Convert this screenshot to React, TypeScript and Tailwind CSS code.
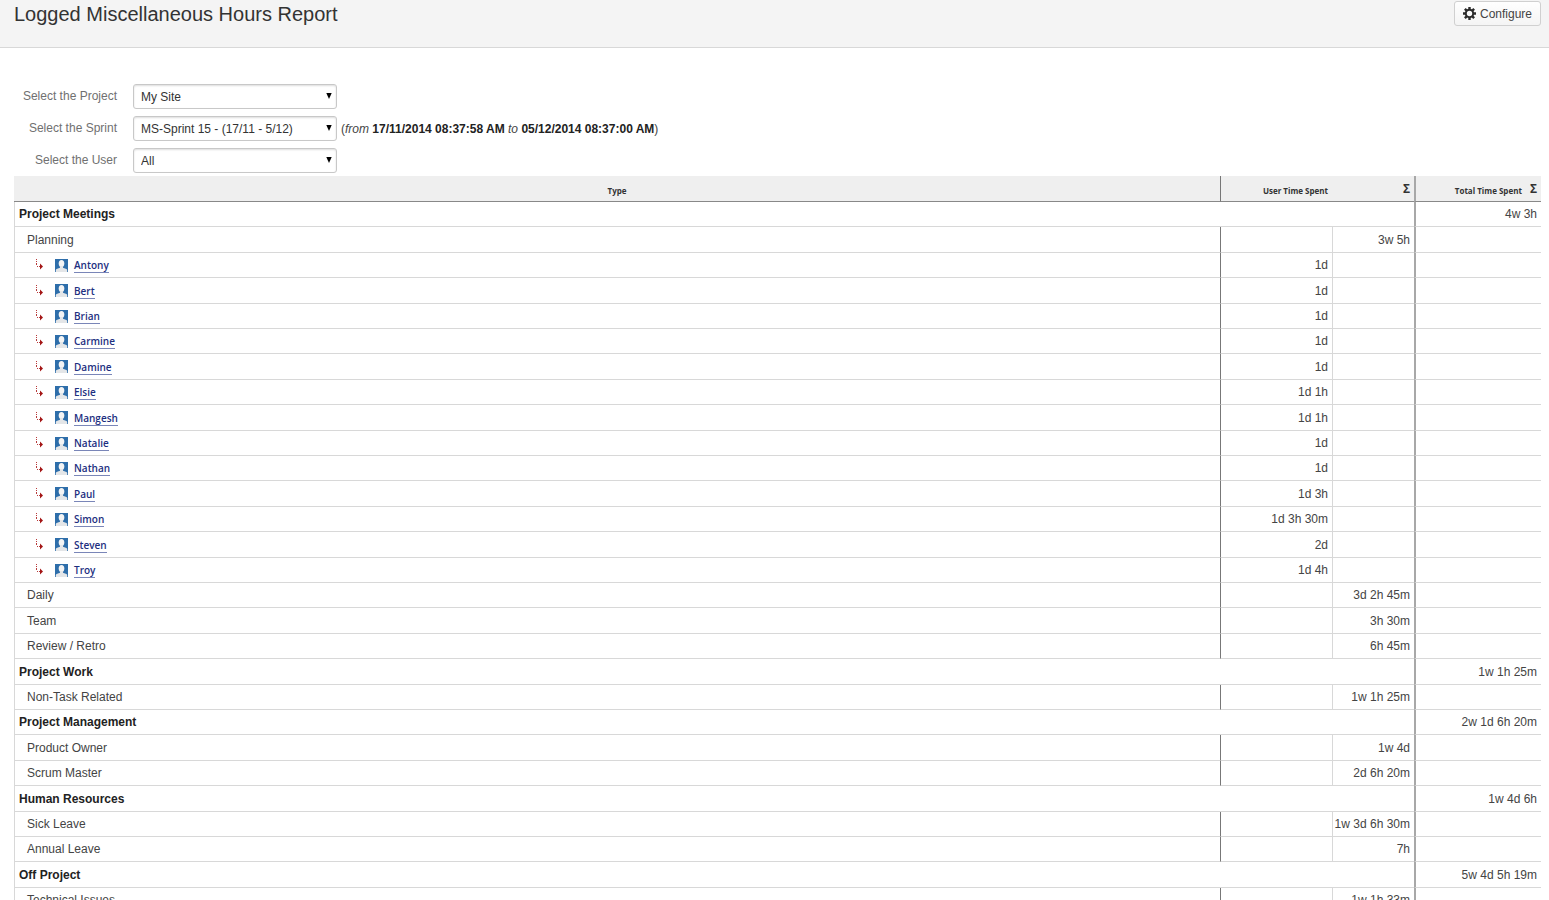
import { ReactNode } from "react";

type Row = {
  kind: "group" | "type" | "user";
  name: string;
  time: string;
};

const projects = ["My Site"];
const sprints = ["MS-Sprint 15 - (17/11 - 5/12)"];
const users = ["All"];

const rows: Row[] = [
  { kind: "group", name: "Project Meetings", time: "4w 3h" },
  { kind: "type", name: "Planning", time: "3w 5h" },
  { kind: "user", name: "Antony", time: "1d" },
  { kind: "user", name: "Bert", time: "1d" },
  { kind: "user", name: "Brian", time: "1d" },
  { kind: "user", name: "Carmine", time: "1d" },
  { kind: "user", name: "Damine", time: "1d" },
  { kind: "user", name: "Elsie", time: "1d 1h" },
  { kind: "user", name: "Mangesh", time: "1d 1h" },
  { kind: "user", name: "Natalie", time: "1d" },
  { kind: "user", name: "Nathan", time: "1d" },
  { kind: "user", name: "Paul", time: "1d 3h" },
  { kind: "user", name: "Simon", time: "1d 3h 30m" },
  { kind: "user", name: "Steven", time: "2d" },
  { kind: "user", name: "Troy", time: "1d 4h" },
  { kind: "type", name: "Daily", time: "3d 2h 45m" },
  { kind: "type", name: "Team", time: "3h 30m" },
  { kind: "type", name: "Review / Retro", time: "6h 45m" },
  { kind: "group", name: "Project Work", time: "1w 1h 25m" },
  { kind: "type", name: "Non-Task Related", time: "1w 1h 25m" },
  { kind: "group", name: "Project Management", time: "2w 1d 6h 20m" },
  { kind: "type", name: "Product Owner", time: "1w 4d" },
  { kind: "type", name: "Scrum Master", time: "2d 6h 20m" },
  { kind: "group", name: "Human Resources", time: "1w 4d 6h" },
  { kind: "type", name: "Sick Leave", time: "1w 3d 6h 30m" },
  { kind: "type", name: "Annual Leave", time: "7h" },
  { kind: "group", name: "Off Project", time: "5w 4d 5h 19m" },
  { kind: "type", name: "Technical Issues", time: "1w 1h 33m" },
];

function GearIcon() {
  return (
    <svg width="13" height="13" viewBox="0 0 14 14" aria-hidden="true">
      <circle cx="7" cy="7" r="4" fill="none" stroke="#2b2b2b" strokeWidth="2.2" />
      <g stroke="#2b2b2b" strokeWidth="2.6">
        <path d="M7 0v2.8M7 11.2V14M0 7h2.8M11.2 7H14" />
        <path d="M2 2l2 2M10 10l2 2M2 12l2-2M10 4l2-2" />
      </g>
    </svg>
  );
}

function BranchIcon() {
  return (
    <svg width="8" height="12" viewBox="0 0 8 12" aria-hidden="true">
      <g fill="#b83a3a">
        <rect x="1" y="0" width="1" height="1" />
        <rect x="1" y="2" width="1" height="1" />
        <rect x="1" y="4" width="1" height="2" />
        <rect x="2" y="7" width="1" height="1" />
        <rect x="4" y="7" width="1" height="1" />
      </g>
      <path d="M5 4.6L8 7.5L5 10.4z" fill="#a31515" />
    </svg>
  );
}

function AvatarIcon() {
  return (
    <svg width="13" height="13" viewBox="0 0 13 13" className="block" aria-hidden="true">
      <rect width="13" height="13" fill="#2e6eaa" />
      <ellipse cx="6.5" cy="4.6" rx="2.8" ry="3.5" fill="#f4f4f4" />
      <path d="M5 7h3v1.8l3.4 1.1c.5.2.8.6.8 1.200V13H.8v-1.900c0-.6.3-1 .8-1.200L5 8.800z" fill="#e4e6e8" />
    </svg>
  );
}

function Filter({
  id,
  label,
  options,
  children,
}: {
  id: string;
  label: string;
  options: string[];
  children?: ReactNode;
}) {
  return (
    <div className="flex h-8 items-center">
      <label htmlFor={id} className="w-[103px] text-right text-[#707070]">
        {label}
      </label>
      <div className="relative ml-4">
        <select
          id={id}
          className="block h-[25px] w-[204px] appearance-none rounded-[3px] border border-[#c8c8c8] bg-white pt-px pr-5 pl-[7px] text-[#333] shadow-[inset_0_1px_2px_#ddd]"
        >
          {options.map((option) => (
            <option key={option}>{option}</option>
          ))}
        </select>
        <svg
          width="6"
          height="6"
          viewBox="0 0 6 6"
          className="pointer-events-none absolute top-[9px] right-[5px]"
          aria-hidden="true"
        >
          <path d="M0.3 0h5.4L3 6z" fill="#000" />
        </svg>
      </div>
      {children}
    </div>
  );
}

function NameCell({ row }: { row: Row }) {
  if (row.kind === "user") {
    return (
      <div className="flex items-center pl-4">
        <BranchIcon />
        <span className="ml-3">
          <AvatarIcon />
        </span>
        <a
          href="#"
          className="ml-1.5 border-b border-[#7a86b8] pt-px font-['Open_Sans',sans-serif] text-[10px] leading-[14px] font-semibold text-[#1d2f7f]"
        >
          {row.name}
        </a>
      </div>
    );
  }
  return <div className="pl-2">{row.name}</div>;
}

function ReportRow({ row }: { row: Row }) {
  const rowClass = "h-[25px] nth-[5n+2]:h-[26px] nth-[5n+4]:h-[26px]";

  if (row.kind === "group") {
    return (
      <tr className={rowClass}>
        <th
          scope="rowgroup"
          colSpan={3}
          className="border-l border-l-[#d8d8d8] px-1 text-left font-bold text-[#222]"
        >
          {row.name}
        </th>
        <td className="border-l-2 border-l-[#a8a8a8] px-1 text-right">{row.time}</td>
      </tr>
    );
  }

  return (
    <tr className={rowClass}>
      <td className="border-l border-l-[#d8d8d8] px-1">
        <NameCell row={row} />
      </td>
      <td className="border-l border-l-[#777] px-1 text-right">
        {row.kind === "user" && row.time}
      </td>
      <td className="border-l border-l-[#d8d8d8] pr-1 text-right whitespace-nowrap">
        {row.kind === "type" && row.time}
      </td>
      <td className="border-l-2 border-l-[#a8a8a8]" />
    </tr>
  );
}

export default function App() {
  return (
    <div className="bg-white font-['Liberation_Sans',Arial,sans-serif] text-[12px] leading-4 text-[#444]">
      <header className="flex h-12 items-start justify-between border-b border-[#d8d8d8] bg-[#f4f4f4] pr-2 pl-[14px]">
        <h1 className="pt-0.5 text-[20px] leading-6 text-[#333]">
          Logged Miscellaneous Hours Report
        </h1>
        <button
          type="button"
          className="mt-px flex h-[25px] items-center gap-1 rounded-[3px] border border-[#d0d0d0] bg-linear-to-b from-white to-[#f4f4f4] px-2"
        >
          <GearIcon />
          Configure
        </button>
      </header>

      <main className="pt-8 pr-2 pl-[14px]">
        <form>
          <Filter id="project" label="Select the Project" options={projects} />
          <Filter id="sprint" label="Select the Sprint" options={sprints}>
            <span className="ml-1 pt-px">
              (<em>from</em> <strong className="text-[#222]">17/11/2014 08:37:58 AM</strong>{" "}
              <em>to</em> <strong className="text-[#222]">05/12/2014 08:37:00 AM</strong>)
            </span>
          </Filter>
          <Filter id="user" label="Select the User" options={users} />
        </form>

        <table className="w-full table-fixed border-separate border-spacing-0">
          <colgroup>
            <col />
            <col className="w-[112px]" />
            <col className="w-[82px]" />
            <col className="w-[127px]" />
          </colgroup>
          <thead className="bg-[#efefef] font-['Open_Sans',sans-serif] text-[8px] text-[#333]">
            <tr className="h-[26px]">
              <th className="border-b border-[#888] pt-1">Type</th>
              <th className="border-b border-l border-b-[#888] border-l-[#777] pt-1 pr-1 text-right">
                User Time Spent
              </th>
              <th className="border-b border-[#888] pr-1 text-right text-[12px]">Σ</th>
              <th className="border-b border-l-2 border-b-[#888] border-l-[#a8a8a8] pr-1">
                <div className="flex items-center justify-end gap-2">
                  <span className="pt-1">Total Time Spent</span>
                  <span className="text-[12px]">Σ</span>
                </div>
              </th>
            </tr>
          </thead>
          <tbody className="[&_td]:border-b [&_td]:border-b-[#d8d8d8] [&_th]:border-b [&_th]:border-b-[#d8d8d8]">
            {rows.map((row) => (
              <ReportRow key={row.name} row={row} />
            ))}
          </tbody>
        </table>
      </main>
    </div>
  );
}
